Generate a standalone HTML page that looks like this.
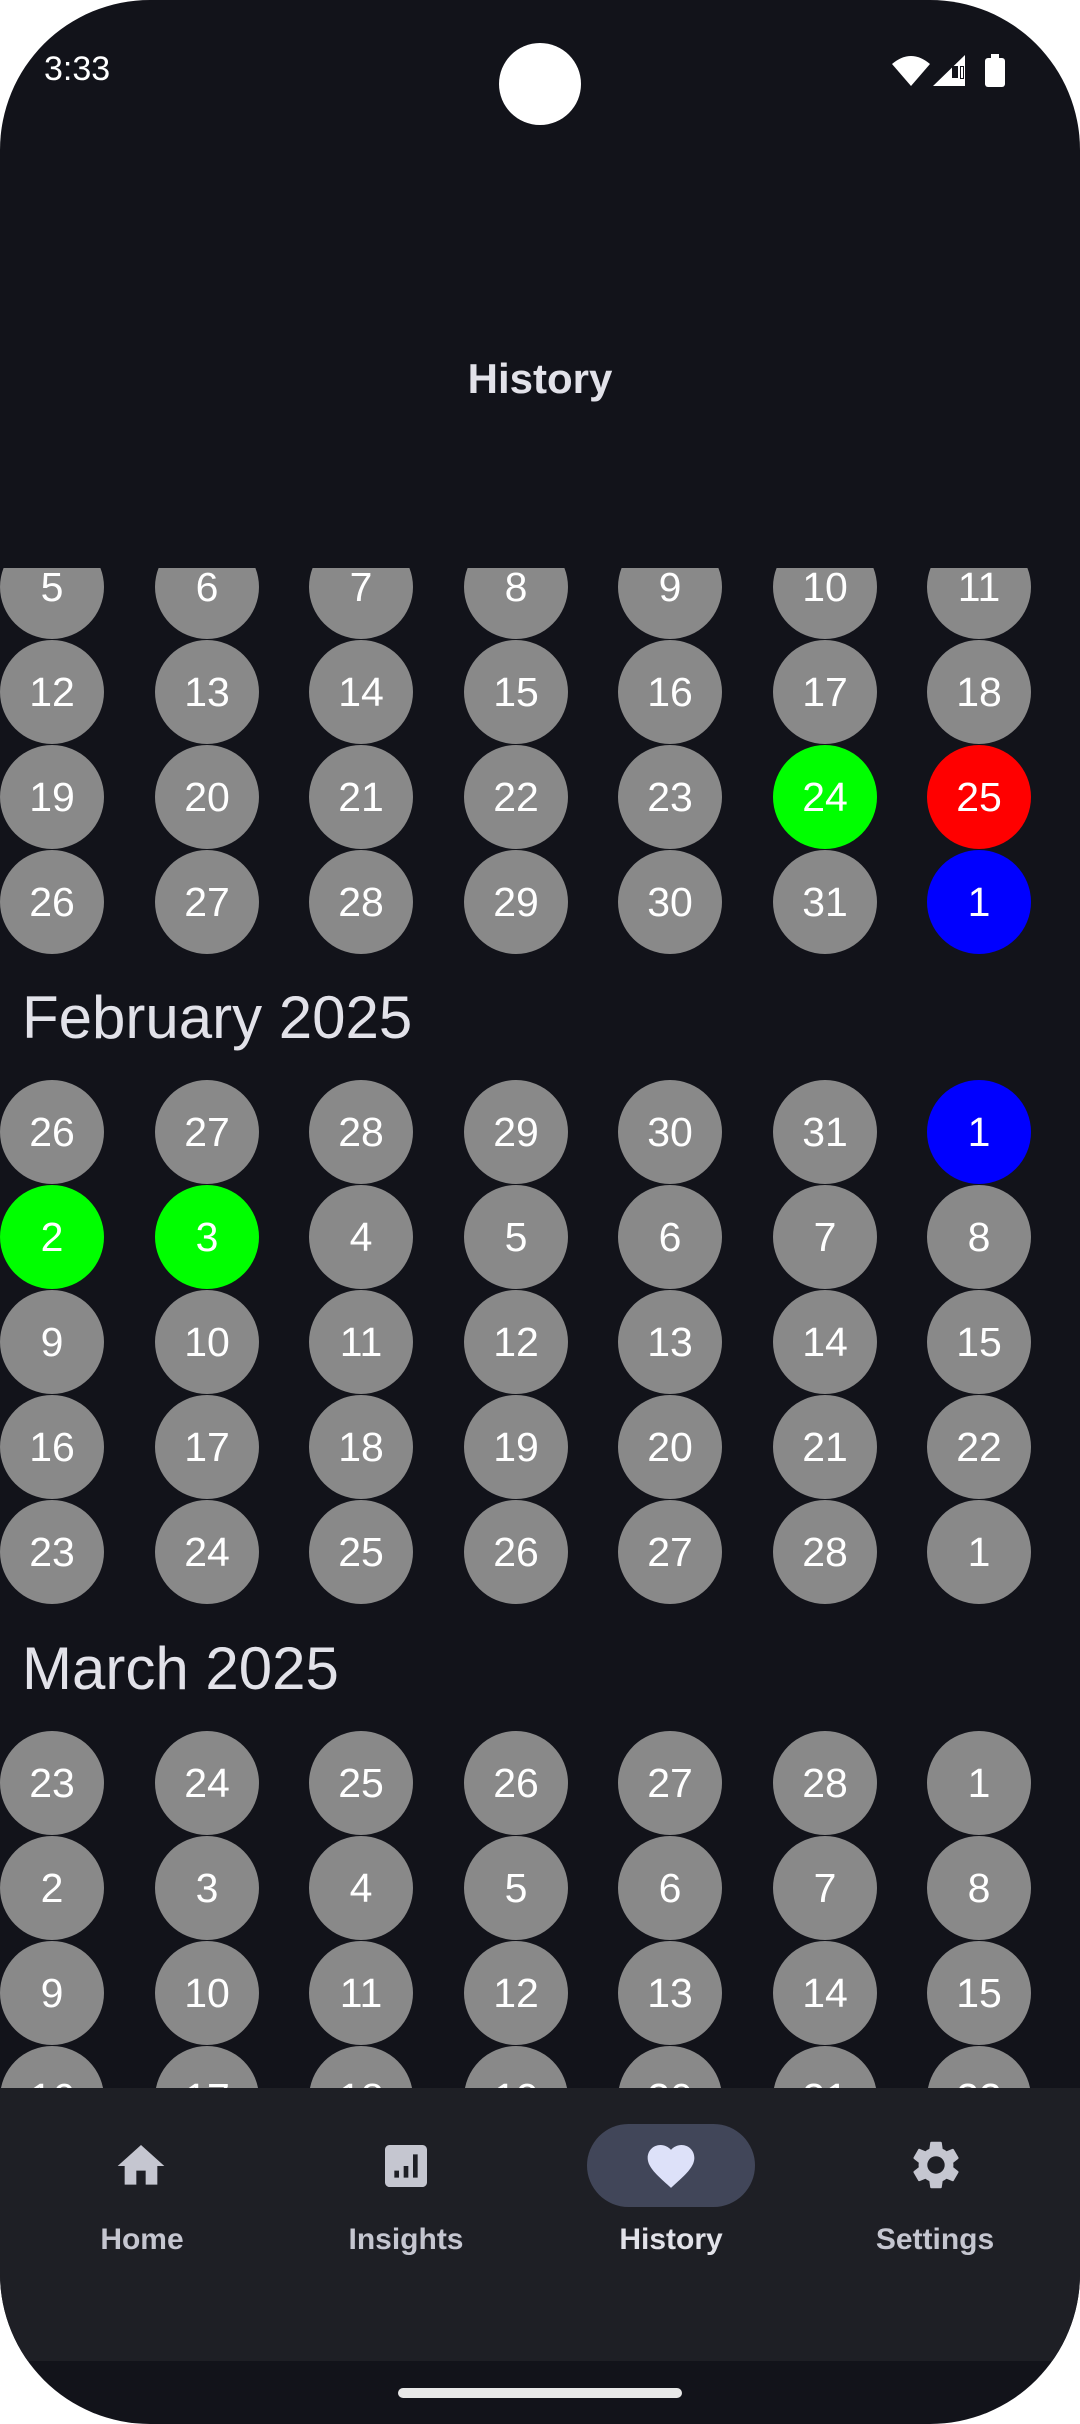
<!DOCTYPE html>
<html><head><meta charset="utf-8"><style>
*{margin:0;padding:0;box-sizing:border-box}
html,body{width:1080px;height:2424px;background:#fff;overflow:hidden}
#scr{position:absolute;left:0;top:0;width:1080px;height:2424px;background:#12131a;border-radius:150px;overflow:hidden;font-family:"Liberation Sans",sans-serif}
.c{position:absolute;width:104px;height:104px;border-radius:50%;background:#898989;color:#fff;font-size:41px;display:flex;align-items:center;justify-content:center}
.h{position:absolute;left:22px;font-size:60px;color:#e2e2e9;line-height:1}
#clip{position:absolute;left:0;top:568px;width:1080px;height:1520px;overflow:hidden}
.nav{position:absolute;left:0;top:2088px;width:1080px;height:273px;background:#1e1f25}
.lbl{position:absolute;top:2223px;font-size:30px;font-weight:bold;color:#c5c6d0;text-align:center;width:240px}
</style></head><body><div id="scr">
<div style="position:absolute;left:44px;top:50px;font-size:34px;color:#fff">3:33</div>
<div style="position:absolute;left:499px;top:43px;width:82px;height:82px;border-radius:50%;background:#fff"></div>
<svg style="position:absolute;left:890px;top:52px" width="120" height="38" viewBox="0 0 120 38">
<path d="M2 12 Q21 -4 40 12 L21 34 Z" fill="#fff"/>
<path d="M43 34 L75 3 L75 34 Z" fill="#fff"/>
<rect x="62" y="14" width="6" height="12" fill="#12131a"/><rect x="70" y="14" width="4" height="13" fill="#12131a"/>
<rect x="71" y="15" width="2" height="11" fill="#fff"/><rect x="71" y="29" width="2" height="4" fill="#fff"/>
<rect x="95" y="6" width="20" height="29" rx="3" fill="#fff"/><rect x="101" y="2" width="8" height="5" fill="#fff"/>
</svg>
<div style="position:absolute;left:0;width:1080px;top:355px;text-align:center;font-size:42px;font-weight:bold;color:#e2e2e9">History</div>
<div id="clip"><div style="position:absolute;left:0;top:-568px;width:1080px;height:2424px" id="cont"></div></div>
<div class="nav"></div>
<div style="position:absolute;left:587px;top:2124px;width:168px;height:83px;border-radius:42px;background:#414659"></div>
<svg style="position:absolute;left:113px;top:2138px" width="56" height="56" viewBox="0 0 24 24"><path d="M10 20v-6h4v6h5v-8h3L12 3 2 12h3v8z" fill="#c5c6d0"/></svg>
<svg style="position:absolute;left:378px;top:2138px" width="56" height="56" viewBox="0 0 24 24"><path d="M19 3H5c-1.1 0-2 .9-2 2v14c0 1.1.9 2 2 2h14c1.1 0 2-.9 2-2V5c0-1.1-.9-2-2-2zM9 17H7v-3h2v3zm4 0h-2v-5h2v5zm4 0h-2V7h2v10z" fill="#c5c6d0"/></svg>
<svg style="position:absolute;left:643px;top:2138px" width="56" height="56" viewBox="0 0 24 24"><path d="M12 21.35l-1.45-1.32C5.4 15.360 2 12.28 2 8.5 2 5.42 4.42 3 7.5 3c1.74 0 3.41.81 4.5 2.09C13.09 3.81 14.76 3 16.5 3 19.58 3 22 5.42 22 8.5c0 3.78-3.4 6.86-8.55 11.54L12 21.35z" fill="#dde1f9"/></svg>
<svg style="position:absolute;left:907px;top:2136px" width="58" height="58" viewBox="0 0 24 24"><path d="M19.14 12.94c.04-.3.06-.61.06-.94 0-.32-.02-.64-.07-.94l2.03-1.58c.18-.14.23-.41.12-.61l-1.92-3.32c-.12-.22-.37-.29-.59-.22l-2.39.96c-.5-.38-1.030-.7-1.62-.94l-.36-2.54c-.04-.24-.24-.41-.48-.41h-3.84c-.24 0-.43.17-.47.41l-.36 2.54c-.59.24-1.13.57-1.62.94l-2.39-.96c-.22-.08-.47 0-.59.22L2.74 8.87c-.12.21-.08.47.12.61l2.03 1.58c-.05.3-.09.63-.09.94s.02.64.07.94l-2.03 1.58c-.18.14-.23.41-.12.61l1.92 3.32c.12.22.37.29.59.22l2.39-.96c.5.38 1.03.7 1.62.94l.36 2.54c.05.24.24.41.48.41h3.84c.24 0 .44-.17.47-.41l.36-2.54c.59-.24 1.13-.56 1.62-.94l2.39.96c.22.08.47 0 .59-.22l1.92-3.32c.12-.22.07-.47-.12-.61l-2.01-1.58zM12 15.6c-1.98 0-3.6-1.62-3.6-3.6s1.62-3.6 3.6-3.6 3.6 1.62 3.6 3.6-1.620 3.6-3.6 3.6z" fill="#c5c6d0"/></svg>
<div class="lbl" style="left:22px">Home</div>
<div class="lbl" style="left:286px">Insights</div>
<div class="lbl" style="left:551px;color:#e2e2e9">History</div>
<div class="lbl" style="left:815px">Settings</div>
<div style="position:absolute;left:398px;top:2388px;width:284px;height:10px;border-radius:5px;background:#e8e8e8"></div>
</div>
<script>
var cont=document.getElementById('cont'),h='';
function row(y,days,cols){for(var i=0;i<7;i++){var col=cols&&cols[i]?cols[i]:'#898989';h+='<div class="c" style="left:'+(Math.round(i*154.5))+'px;top:'+(y-52)+'px;background:'+col+'">'+days[i]+'</div>';}}
var G='#00ff00',R='#ff0000',B='#0000ff';
row(587,[5,6,7,8,9,10,11]);row(692,[12,13,14,15,16,17,18]);row(797,[19,20,21,22,23,24,25],[0,0,0,0,0,G,R]);row(902,[26,27,28,29,30,31,1],[0,0,0,0,0,0,B]);
h+='<div class="h" style="top:988px">February 2025</div>';
row(1132,[26,27,28,29,30,31,1],[0,0,0,0,0,0,B]);row(1237,[2,3,4,5,6,7,8],[G,G]);row(1342,[9,10,11,12,13,14,15]);row(1447,[16,17,18,19,20,21,22]);row(1552,[23,24,25,26,27,28,1]);
h+='<div class="h" style="top:1639px">March 2025</div>';
row(1783,[23,24,25,26,27,28,1]);row(1888,[2,3,4,5,6,7,8]);row(1993,[9,10,11,12,13,14,15]);row(2098,[16,17,18,19,20,21,22]);
cont.innerHTML=h;
</script>
</body></html>
